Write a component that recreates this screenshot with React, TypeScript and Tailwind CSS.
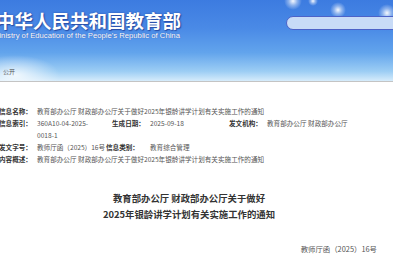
const CJK = "font-['Noto_Sans_CJK_SC','Noto_Sans',sans-serif]";

const TITLE = '教育部办公厅 财政部办公厅关于做好2025年银龄讲学计划有关实施工作的通知';

function Label({ children, w = 'w-[38px]' }: { children: string; w?: string }) {
  return <span className={`${w} shrink-0 font-bold text-[#333]`}>{children}</span>;
}

function Value({ children, w }: { children: string; w?: string }) {
  return <span className={`${w ?? ''} shrink-0 whitespace-nowrap text-[#555]`}>{children}</span>;
}

function Sparkle({ className }: { className: string }) {
  return (
    <div
      className={`absolute rounded-full bg-[radial-gradient(circle,rgba(255,255,255,0.95)_0%,rgba(255,255,255,0.4)_35%,rgba(255,255,255,0)_70%)] ${className}`}
    />
  );
}

function Banner() {
  return (
    <div className="relative h-[82px] overflow-hidden border-b border-[#c4c4c4] bg-[linear-gradient(180deg,#3c7be0_0%,#4a8ae6_35%,#62a4ec_65%,#9ccdf4_88%,#d6ecfb_100%)]">
      {/* haze / cloud bottom left */}
      <div className="absolute left-[-30px] top-[55px] h-[40px] w-[90px] rounded-full bg-[radial-gradient(ellipse,rgba(255,255,255,0.8)_0%,rgba(255,255,255,0)_70%)]" />
      <Sparkle className="left-[284px] top-[-8px] h-[18px] w-[18px]" />
      <Sparkle className="left-[308px] top-[-4px] h-[10px] w-[10px]" />
      <Sparkle className="left-[330px] top-[2px] h-[16px] w-[16px]" />
      <Sparkle className="left-[378px] top-[4px] h-[18px] w-[18px]" />

      <div className={`absolute left-[-4px] top-[10px] ${CJK}`}>
        <div className="text-[18.5px] font-bold leading-[20px] text-white [text-shadow:0_0_2px_#2a4fa8,1px_1px_1px_#2a4fa8]">
          中华人民共和国教育部
        </div>
      </div>
      <div className="absolute left-[-7px] top-[31px] font-['Liberation_Sans',sans-serif] text-[7.7px] leading-[9px] text-white [text-shadow:0_0_1px_#2a4fa8]">
        Ministry of Education of the People's Republic of China
      </div>

      <div className="absolute left-[286px] top-[16px] h-[14px] w-[130px] rounded-full border border-[#4c62c8] bg-[#c8dbf7]" />

      <div className={`absolute left-[3px] top-[68px] text-[6px] leading-[8px] text-[#555] ${CJK}`}>公开</div>
    </div>
  );
}

function InfoTable() {
  return (
    <div className={`mt-[23px] ml-[-1px] text-[6.6px] leading-[12px] ${CJK}`}>
      <div className="flex">
        <Label>信息名称：</Label>
        <Value>{TITLE}</Value>
      </div>
      <div className="flex">
        <Label>信息索引：</Label>
        <Value w="w-[75px]">360A10-04-2025-</Value>
        <Label>生成日期：</Label>
        <Value w="w-[79px]">2025-09-18</Value>
        <Label>发文机构：</Label>
        <Value>教育部办公厅 财政部办公厅</Value>
      </div>
      <div className="flex">
        <span className="w-[38px] shrink-0" />
        <Value>0018-1</Value>
      </div>
      <div className="flex">
        <Label>发文字号：</Label>
        <Value w="w-[69px]">教师厅函（2025）16号</Value>
        <Label w="w-[44px]">信息类别：</Label>
        <Value>教育综合管理</Value>
      </div>
      <div className="flex">
        <Label>内容概述：</Label>
        <Value>{TITLE}</Value>
      </div>
    </div>
  );
}

export default function App() {
  return (
    <div className="h-[267px] w-[393px] overflow-hidden bg-white">
      <Banner />
      <InfoTable />
      <div className={`mt-[25px] pr-[15px] text-center text-[9.4px] font-bold leading-[16px] text-[#333] ${CJK}`}>
        <div>教育部办公厅 财政部办公厅关于做好</div>
        <div>2025年银龄讲学计划有关实施工作的通知</div>
      </div>
      <div className={`mt-[21px] pr-[16px] text-right text-[7.4px] leading-[12px] text-[#555] ${CJK}`}>
        教师厅函（2025）16号
      </div>
    </div>
  );
}
